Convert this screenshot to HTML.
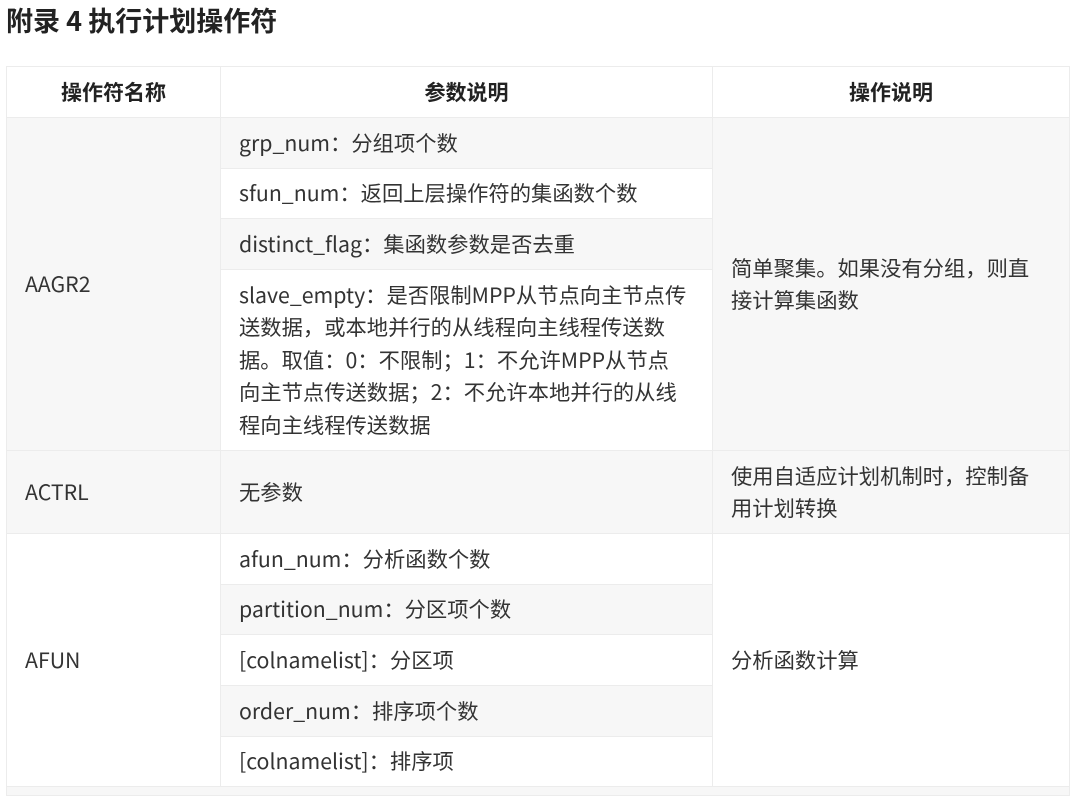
<!DOCTYPE html>
<html><head><meta charset="utf-8"><style>
body{margin:0;width:1080px;height:790px;background:#fff;overflow:hidden;font-family:"Noto Sans CJK SC","Liberation Sans",sans-serif;color:#333;position:relative}
.t{position:absolute;left:6px;top:1px;font-size:27px;line-height:38px;font-weight:bold;color:#222}
.c{position:absolute;box-sizing:border-box;border:1px solid #ececec;font-size:21.3px;line-height:32.5px;display:flex;align-items:center;padding:0 18px;white-space:nowrap}
.g{background:#f7f7f7}
.h{font-weight:bold;justify-content:center;color:#222;font-size:21px}
</style></head><body>
<div class="t">附录 4 执行计划操作符</div>
<div class="c h" style="left:6px;top:66px;width:215px;height:52px">操作符名称</div>
<div class="c h" style="left:220px;top:66px;width:493px;height:52px">参数说明</div>
<div class="c h" style="left:712px;top:66px;width:358px;height:52px">操作说明</div>

<div class="c g" style="left:6px;top:117px;width:215px;height:334px">AAGR2</div>
<div class="c g" style="left:220px;top:117px;width:493px;height:52px">grp_num：分组项个数</div>
<div class="c" style="left:220px;top:168px;width:493px;height:51px">sfun_num：返回上层操作符的集函数个数</div>
<div class="c g" style="left:220px;top:218px;width:493px;height:52px">distinct_flag：集函数参数是否去重</div>
<div class="c" style="left:220px;top:269px;width:493px;height:182px"><div>slave_empty：是否限制MPP从节点向主节点传<br>送数据，或本地并行的从线程向主线程传送数<br>据。取值：0：不限制；1：不允许MPP从节点<br>向主节点传送数据；2：不允许本地并行的从线<br>程向主线程传送数据</div></div>
<div class="c g" style="left:712px;top:117px;width:358px;height:334px"><div>简单聚集。如果没有分组，则直<br>接计算集函数</div></div>

<div class="c g" style="left:6px;top:450px;width:215px;height:84px">ACTRL</div>
<div class="c g" style="left:220px;top:450px;width:493px;height:84px">无参数</div>
<div class="c g" style="left:712px;top:450px;width:358px;height:84px"><div>使用自适应计划机制时，控制备<br>用计划转换</div></div>

<div class="c" style="left:6px;top:533px;width:215px;height:254px">AFUN</div>
<div class="c" style="left:220px;top:533px;width:493px;height:52px">afun_num：分析函数个数</div>
<div class="c g" style="left:220px;top:584px;width:493px;height:51px">partition_num：分区项个数</div>
<div class="c" style="left:220px;top:634px;width:493px;height:52px">[colnamelist]：分区项</div>
<div class="c g" style="left:220px;top:685px;width:493px;height:52px">order_num：排序项个数</div>
<div class="c" style="left:220px;top:736px;width:493px;height:51px">[colnamelist]：排序项</div>
<div class="c" style="left:712px;top:533px;width:358px;height:254px">分析函数计算</div>
<div class="c g" style="left:6px;top:786px;width:1064px;height:10px"></div>
</body></html>
